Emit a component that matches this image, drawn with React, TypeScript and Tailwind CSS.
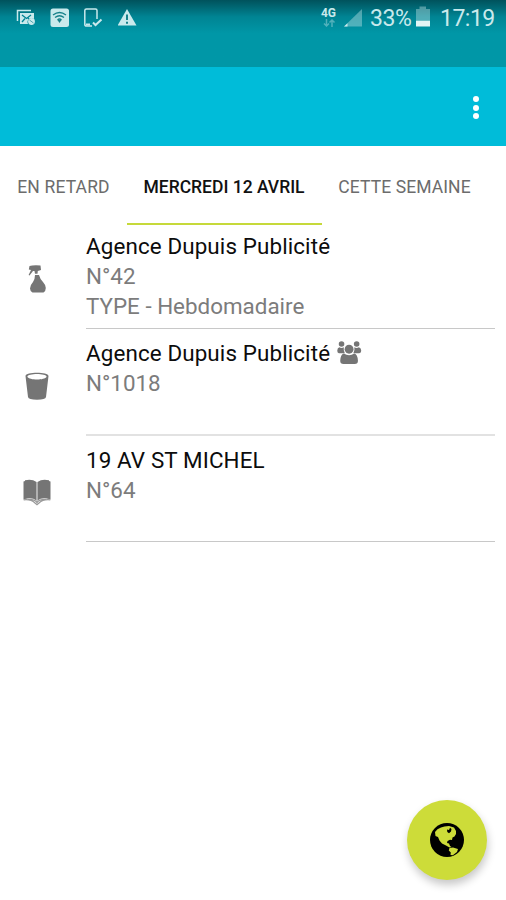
import React from 'react';

type IconProps = { className?: string };

const SprayIcon: React.FC<IconProps> = ({ className }) => (
  <svg viewBox="0 0 18 28" className={className} fill="currentColor">
    <path d="M1.500 1 Q5 0 12.500 .5 L13 5 L9.800 6 L9.500 8.800 H7 L6.500 6 H5 L1.500 10.500 L.6 10 L3 5 L.8 4.500 Z" />
    <path d="M7 10 H11 Q12 14 15 17 Q17.800 20 17.800 23 Q17.800 26 15.500 27.500 H4.500 Q2 26 2 23.500 Q2.200 20 5 17 Q7 14 7 10 Z" />
  </svg>
);

const BucketIcon: React.FC<IconProps> = ({ className }) => (
  <svg viewBox="0 0 24 28" className={className} fill="currentColor">
    <path
      fillRule="evenodd"
      d="M.5 4 C.5 -.3 23.500 -.3 23.500 4 L21 25 Q20.500 27.700 12 27.700 Q3.500 27.700 3 25 Z M2.400 4.800 C4.500 8.500 19.500 8.500 21.600 4.800 C21.500 1.200 2.500 1.200 2.400 4.800 Z"
    />
  </svg>
);

const BookIcon: React.FC<IconProps> = ({ className }) => (
  <svg viewBox="0 0 28 27" className={className}>
    <path fill="currentColor" d="M.5 2.500 L2 2 V1.200 Q9-.5 13.500 3 V21.500 Q9 18 2 20 L.5 20.500 Z M14.500 3 Q19-.5 26 1.200 V2 L27.500 2.500 V20.500 L26 20 Q19 18 14.500 21.500 Z" />
    <path fill="#aaa" d="M13.500 3 H14.500 V22 H13.500 Z" />
    <path fill="none" stroke="#999" strokeWidth="1.200" d="M.7 20.800 Q8 20 12 24 L14 25.800 L16 24 Q20 20 27.300 20.800 M5 20.500 Q11 20 14 23.500 Q17 20 23 20.500" />
  </svg>
);

const UsersIcon: React.FC<IconProps> = ({ className }) => (
  <svg viewBox="0 0 73 70" className={className} fill="currentColor">
    <circle cx="13" cy="9" r="8.500" />
    <circle cx="59" cy="9" r="8.500" />
    <circle cx="36" cy="25" r="13.500" />
    <path d="M6 19 Q13 23 20 19 Q18 28 23 37 H5 Q0 37 0 30 Q0 21 6 19 Z" />
    <path d="M66 19 Q59 23 52 19 Q54 28 49 37 H67 Q73 37 73 30 Q73 21 66 19 Z" />
    <path d="M20 38 Q36 48 52 38 Q62 41 63 60 Q63 70 53 70 H19 Q9 70 9 60 Q10 41 20 38 Z" />
  </svg>
);

const GlobeIcon: React.FC<IconProps> = ({ className }) => (
  <svg viewBox="0 0 34 34" className={className}>
    <circle cx="17" cy="17" r="17" fill="#000" />
    <path
      fill="#cddc39"
      d="M5 9 Q7 5.500 11 4.500 L14.500 3.500 L19 3 L24 4.500 L26 8 L26 11 L24.500 13.500 L22.500 14.500 L22 17 L20 16.800 L17.500 18 L17 20 L19 20.500 L20 23 L21.500 24 L19.500 24.500 L16 22.500 L12 20.500 L9.500 17.500 L8 14 L5.500 13 Z"
    />
    <path fill="#000" d="M17 6.500 L19 7 L20 4.800 L21.500 6 L21 8.500 L19 10.200 L17.300 9 Z" />
    <path fill="#cddc39" d="M19.500 25 L23 24.500 L28 26 L27 29 L22.800 32.200 L20.500 32 L20.800 29.500 L18.800 27.500 Z" />
  </svg>
);

const StatusBar: React.FC = () => (
  <div className="flex h-[67px] items-start justify-between bg-linear-to-b from-[#00525c] via-[#008493] via-25% to-[#0097a7] to-50% pr-[12px] pl-4 text-[#c9e9ec]">
    <div className="flex items-center gap-[14px] pt-2">
      <svg viewBox="0 0 20 20" className="h-5 w-5">
        <path d="M1.500 13 V2.500 H15" fill="none" stroke="currentColor" strokeWidth="1.500" />
        <path d="M4 5 H18 V11 A4 4 0 0 0 12 16 H4 Z" fill="currentColor" />
        <path d="M6 7 L10.500 10.500 L15 7 M6 14 L9 10.500 M15 13 L12 10" fill="none" stroke="#008493" strokeWidth="1.300" />
        <circle cx="15.500" cy="13.500" r="3.400" fill="currentColor" />
        <path d="M13.500 12 L17.500 15" stroke="#4fa5ad" strokeWidth="1" />
      </svg>
      <svg viewBox="0 0 20 20" className="h-5 w-5">
        <rect x=".5" y=".5" width="18.500" height="18.500" rx="2.500" fill="currentColor" />
        <path d="M3 7 Q9.500 2 16 7 M5 9.500 Q9.500 6 14 9.500 M7.500 12 Q9.500 10 11.500 12" fill="none" stroke="#16808a" strokeWidth="1.300" />
        <path d="M7.500 12 L9.500 15 L11.500 12 Z" fill="#16808a" />
      </svg>
      <svg viewBox="0 0 20 20" className="h-5 w-5" fill="none" stroke="currentColor">
        <path d="M8 18 H2.500 Q.8 18 .8 16.500 V2.500 Q.8 1 2.500 1 H11.500 Q13 1 13 2.500 V11" strokeWidth="1.500" />
        <path d="M2 16.500 H6" strokeWidth="2" />
        <path d="M9 14.500 L11.500 17 L17.500 11.500" strokeWidth="2" />
      </svg>
      <svg viewBox="0 0 20 20" className="h-5 w-5">
        <path d="M9 1 L18.500 17.500 H-.5 Z" fill="currentColor" />
        <path d="M9 6.500 V12 M9 13.800 V15.800" stroke="#16808a" strokeWidth="2" />
      </svg>
    </div>
    <div className="flex items-start">
      <div className="mt-[7px] w-[17px]">
        <div className="text-[12px] leading-3 font-bold tracking-[-0.2px]">4G</div>
        <svg viewBox="0 0 14 8" className="ml-[2px] h-2 w-[14px] opacity-40" fill="none" stroke="currentColor" strokeWidth="1.500">
          <path d="M3.500 0 V7 M1 4.500 L3.500 7 L6 4.500 M9 8 V1 M6.500 3.500 L9 1 L11.500 3.500" />
        </svg>
      </div>
      <svg viewBox="0 0 20 20" className="mt-2 ml-[5px] h-5 w-5">
        <path d="M1 18.500 L19 1 V18.500 Z" fill="currentColor" opacity=".4" />
        <path d="M1 18.500 L4.500 15.200 V18.500 Z" fill="currentColor" />
      </svg>
      <span className="mt-[7px] ml-[7px] w-[42px] text-[23px] leading-6 tracking-[-0.4px] whitespace-nowrap">33%</span>
      <svg viewBox="0 0 16 22" className="mt-[6px] ml-[3px] h-[22px] w-4">
        <path d="M1 3 H4.500 V.5 H11 V3 H15 V14 H1 Z" fill="currentColor" opacity=".4" />
        <path d="M1 14.500 H15 V20.500 H1 Z" fill="#e2f4f5" />
      </svg>
      <span className="mt-[7px] ml-[9px] w-[54px] text-[23px] leading-6 tracking-[-0.5px] whitespace-nowrap">17:19</span>
    </div>
  </div>
);

interface Task {
  title: string;
  number: string;
  type?: string;
  shared?: boolean;
  icon: React.ReactNode;
  rowClass: string;
  bodyClass: string;
}

const tasks: Task[] = [
  {
    title: 'Agence Dupuis Publicité',
    number: 'N°42',
    type: 'TYPE - Hebdomadaire',
    icon: <SprayIcon className="h-7 w-[18px]" />,
    rowClass: 'h-[104px]',
    bodyClass: 'border-b border-[#c8c8c8] pt-[5.5px]',
  },
  {
    title: 'Agence Dupuis Publicité',
    number: 'N°1018',
    shared: true,
    icon: <BucketIcon className="h-7 w-6" />,
    rowClass: 'h-[107px]',
    bodyClass: 'border-b-2 border-[#e2e2e2] pt-[8.5px]',
  },
  {
    title: '19 AV ST MICHEL',
    number: 'N°64',
    icon: <BookIcon className="h-[27px] w-7" />,
    rowClass: 'h-[106px]',
    bodyClass: 'border-b border-[#c8c8c8] pt-[8.5px]',
  },
];

const TaskRow: React.FC<{ task: Task }> = ({ task }) => (
  <li className={`flex pr-[11px] ${task.rowClass}`}>
    <div className="flex w-[86px] items-end justify-center pr-[12px] pb-[36.5px] text-[#757575]">{task.icon}</div>
    <div className={`flex-1 text-[22.4px] leading-[30.3px] text-[#7c7c7c] ${task.bodyClass}`}>
      <div className="flex items-center gap-[7px] tracking-[0.12px] text-[#0c0c0c]">
        {task.title}
        {task.shared && <UsersIcon className="h-[23px] w-[24.5px] text-[#757575]" />}
      </div>
      <div>{task.number}</div>
      {task.type && <div>{task.type}</div>}
    </div>
  </li>
);

export default function App() {
  return (
    <div className="relative flex h-[900px] w-[506px] flex-col overflow-hidden bg-white font-[Roboto,sans-serif]">
      <StatusBar />
      <header className="flex h-[79px] items-center justify-end bg-[#00bcd9] pt-0.5 pr-[27px]">
        <div className="flex flex-col gap-[2.5px]">
          <span className="h-[6px] w-[6px] rounded-full bg-white" />
          <span className="h-[6px] w-[6px] rounded-full bg-white" />
          <span className="h-[6px] w-[6px] rounded-full bg-white" />
        </div>
      </header>
      <nav className="flex h-[79px] text-[17.5px] whitespace-nowrap text-[#6c6c6c]">
        <div className="flex w-[127px] items-center justify-center pt-[3px] tracking-[0.15px]">EN RETARD</div>
        <div className="flex w-[195px] items-center justify-center border-b-[2px] border-[#c6d93a] pt-[5px] pr-px font-medium text-[#111]">
          MERCREDI 12 AVRIL
        </div>
        <div className="flex w-[165px] items-center justify-center pt-[3px] tracking-[0.1px]">CETTE SEMAINE</div>
      </nav>
      <ul>
        {tasks.map((task) => (
          <TaskRow key={task.number} task={task} />
        ))}
      </ul>
      <button className="absolute top-[800px] left-[406.5px] flex h-20 w-20 items-center justify-center rounded-full bg-[#cddc39] shadow-[1px_5px_8px_rgba(0,0,0,0.22)]">
        <GlobeIcon className="h-[34px] w-[34px]" />
      </button>
    </div>
  );
}
